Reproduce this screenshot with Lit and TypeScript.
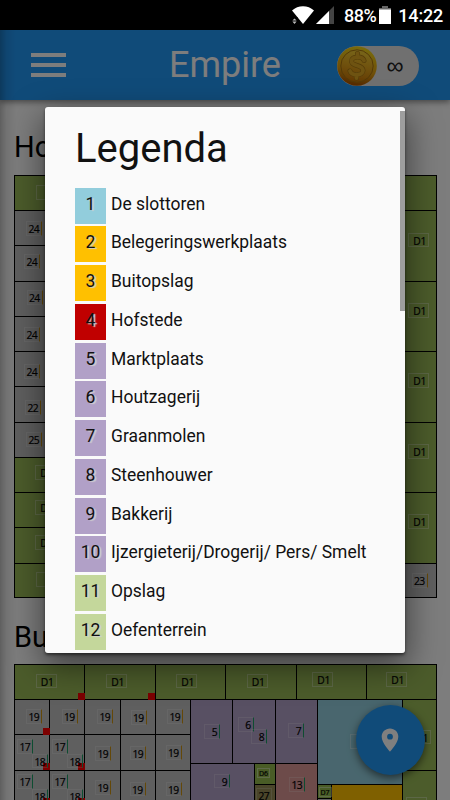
import { LitElement, html, css, svg } from "lit";
import { customElement, property } from "lit/decorators.js";

type Cell = { c: number; r: number; w: number; h: number; k: string };
type Tag = { x: number; y: number; t: string; k?: string };
type Mark = { x: number; y: number };

const cell = (c: number, r: number, w: number, h: number, k: string): Cell => ({ c, r, w, h, k });
const tag = (x: number, y: number, t: string, k = "num gold"): Tag => ({ x, y, t, k });

// The maps are laid out on a grid of 60 x 60 units.
const capitalCells: Cell[] = [
  ...[0, 1, 2, 3, 4, 5].map((i) => cell(i * 10, 0, 10, 5, "green")),
  ...[1, 2, 3, 4, 5, 6, 7].map((i) => cell(0, i * 5, 5, 5, "grey")),
  ...[8, 9, 10, 11].map((i) => cell(0, i * 5, 10, 5, "green")),
  ...[0, 1, 2, 3, 4].map((i) => cell(55, 5 + i * 10, 5, 10, "green")),
  cell(55, 55, 5, 5, "grey"),
];
const capitalTags: Tag[] = [
  tag(22, 10, "", "zone"),
  tag(12, 46, "24"), tag(10, 79, "24"), tag(12.5, 115, "24"), tag(10, 152, "24"),
  tag(10, 189, "24"), tag(11, 225, "22"), tag(12, 257, "25"),
  tag(21, 290, "D1", "zone"), tag(21, 325, "D1", "zone"), tag(21, 360, "D1", "zone"), tag(22, 397, "", "zone"),
  ...[57.5, 128, 198, 269, 339].map((y) => tag(394, y, "D1", "zone")),
  tag(397.5, 398, "23"),
];

const outpostCells: Cell[] = [
  ...[0, 1, 2, 3, 4, 5].map((i) => cell(i * 10, 0, 10, 5, "green")),
  ...[1, 2, 3].flatMap((r) => [0, 1, 2, 3, 4].map((c) => cell(c * 5, r * 5, 5, 5, "grey"))),
  cell(25, 5, 6, 9, "purple"), cell(31, 5, 6, 9, "purple"), cell(37, 5, 6, 9, "purple"),
  cell(43, 5, 12, 12, "blue"),
  cell(55, 5, 5, 10, "green"), cell(55, 15, 5, 10, "green"),
  cell(25, 14, 9, 6, "purple"), cell(34, 14, 3, 3, "lime"), cell(34, 17, 3, 3, "olive"),
  cell(37, 14, 6, 6, "rose"),
  cell(43, 17, 2, 2, "lime"), cell(43, 19, 2, 1, "grey"), cell(45, 17, 10, 3, "orange"),
];
const outpostTags: Tag[] = [
  tag(21.5, 9.5, "D1", "zone"), tag(92, 9.5, "D1", "zone"), tag(162, 9.5, "D1", "zone"), tag(232.5, 9.5, "D1", "zone"),
  tag(298, 8, "D1", "zone"), tag(372, 8, "D1", "zone"),
  tag(12, 45, "19"), tag(47.5, 45, "19"), tag(83, 45, "19"), tag(116.5, 46, "19"), tag(153, 45, "19"),
  tag(81, 82, "19"), tag(116, 81.5, "19"), tag(151.5, 81, "19"),
  tag(81, 116, "19"), tag(115.5, 117.5, "19"), tag(151.5, 117.5, "19"),
  ...[75, 110].flatMap((y) => [
    tag(3, y, "17", "num jade"), tag(38, y, "17", "num jade"),
    tag(18, y + 14.5, "18", "num jade"), tag(53, y + 14.5, "18", "num jade"),
  ]),
  tag(190, 60, "5", "num jade"), tag(223.5, 53, "6", "num jade"), tag(237, 65, "8", "num jade"),
  tag(274, 59, "7", "num jade"), tag(200, 109.5, "9", "num jade"),
  tag(243, 104, "D6", "tiny"), tag(242, 123.5, "27", "num"), tag(275, 113, "13", "num jade"),
  tag(336, 70, "", "zone"), tag(396, 65.5, "D1", "zone"), tag(392, 133, "", "zone"), tag(304.5, 123, "D7", "tiny"),
];
const outpostMarks: Mark[] = [
  { x: 64, y: 28.5 }, { x: 134, y: 28.5 }, { x: 29, y: 63.5 }, { x: 29, y: 98.5 },
  { x: 64, y: 98.5 }, { x: 29, y: 133.5 }, { x: 64, y: 133.5 },
];

const legend: [string, string, string][] = [
  ["1", "De slottoren", "blue"],
  ["2", "Belegeringswerkplaats", "orange"],
  ["3", "Buitopslag", "orange"],
  ["4", "Hofstede", "red"],
  ["5", "Marktplaats", "purple"],
  ["6", "Houtzagerij", "purple"],
  ["7", "Graanmolen", "purple"],
  ["8", "Steenhouwer", "purple"],
  ["9", "Bakkerij", "purple"],
  ["10", "Ijzergieterij/Drogerij/ Pers/ Smelt", "purple"],
  ["11", "Opslag", "light"],
  ["12", "Oefenterrein", "light"],
];

@customElement("castle-map")
class CastleMap extends LitElement {
  @property({ attribute: false }) cells: Cell[] = [];
  @property({ attribute: false }) tags: Tag[] = [];
  @property({ attribute: false }) marks: Mark[] = [];

  static styles = css`
    :host { display: block; position: relative; width: 423px; height: 423px; margin-left: 14px;
      outline: 1px solid #000; outline-offset: -1px; background: #98b956; }
    .grid { display: grid; width: 423px; height: 423px; grid-template-columns: repeat(60, 7.05px); grid-template-rows: repeat(60, 7.05px); }
    .cell { border-left: 1px solid #000; border-top: 1px solid #000; }
    .green { background: #98b956; }
    .grey { background: #bfbfbf; }
    .purple { background: #b1a0c7; }
    .blue { background: #92cddc; }
    .rose { background: #da9694; }
    .orange { background: #ffc000; }
    .lime { background: #92b84c; }
    .olive { background: #948a54; }
    .tag { position: absolute; box-sizing: border-box; height: 14.5px; border: 1px solid rgba(255, 255, 255, 0.22);
      font: 10.3px/15px "Open Sans", "Noto Sans", sans-serif; letter-spacing: -0.6px; color: #000; text-align: right; white-space: nowrap; -webkit-text-stroke: 0.2px #000; }
    .zone { width: 21px; padding-right: 2px; letter-spacing: -0.3px; border-color: rgba(255, 255, 255, 0.32); }
    .num { width: 16px; padding-right: 2px; }
    .gold { border-right-color: #c89010; }
    .jade { border-right-color: #1c9a62; }
    .tiny { width: 13px; height: 10px; padding-right: 1px; font-size: 7px; line-height: 9px; letter-spacing: 0; border-color: rgba(255, 255, 255, 0.4); }
    .mark { position: absolute; width: 7px; height: 7px; background: #f80000; }
  `;

  render() {
    return html`
      <div class="grid">
        ${this.cells.map((d) => html`<div class="cell ${d.k}" style="grid-area:${d.r + 1}/${d.c + 1}/span ${d.h}/span ${d.w}"></div>`)}
      </div>
      ${this.marks.map((m) => html`<i class="mark" style="left:${m.x}px;top:${m.y}px"></i>`)}
      ${this.tags.map((t) => html`<span class="tag ${t.k}" style="left:${t.x}px;top:${t.y}px">${t.t}</span>`)}
    `;
  }
}

const coin = svg`
  <defs>
    <linearGradient id="face" x1="0.6" y1="0" x2="0.4" y2="1">
      <stop offset="0" stop-color="#f0cc34"></stop><stop offset="0.5" stop-color="#e0a41c"></stop><stop offset="1" stop-color="#c87406"></stop>
    </linearGradient>
    <linearGradient id="rim" x1="0.6" y1="0" x2="0.4" y2="1">
      <stop offset="0" stop-color="#f2d818"></stop><stop offset="0.6" stop-color="#e0a010"></stop><stop offset="1" stop-color="#a85000"></stop>
    </linearGradient>
  </defs>
  <circle cx="20" cy="20" r="19.8" fill="url(#rim)"></circle>
  <circle cx="20" cy="20" r="16.2" fill="url(#face)" stroke="#a87410" stroke-width="1"></circle>
  <g fill="none" stroke-linecap="round">
    <path d="M27 14.5C25.5 9.8 14.5 9.8 14.5 15.3C14.5 20.8 26 18.2 26 24.5C26 30 14.5 29.8 13 25M20.5 7.5V11M19.5 28.5V32" stroke="#a87812" stroke-width="5"></path>
    <path d="M27 14.5C25.5 9.8 14.5 9.8 14.5 15.3C14.5 20.8 26 18.2 26 24.5C26 30 14.5 29.8 13 25M20.5 7.5V11M19.5 28.5V32" stroke="#dca622" stroke-width="3.8"></path>
  </g>`;

@customElement("app-root")
class AppRoot extends LitElement {
  static styles = css`
    :host { display: flex; flex-direction: column; position: relative; width: 450px; height: 800px; overflow: hidden;
      background: #000; font-family: Roboto, sans-serif; color: #000; }
    .status { height: 30px; flex: none; display: flex; align-items: center; justify-content: flex-end; color: #fff;
      font-size: 18px; font-weight: 500; padding-right: 7px; box-sizing: border-box; }
    .status svg { flex: none; }
    .pct { margin-left: 10px; width: 33px; letter-spacing: -0.5px; }
    .battery { margin-left: 2px; }
    .clock { margin-left: 7px; width: 45px; text-align: right; letter-spacing: -0.2px; }
    .app { position: relative; height: 770px; flex: none; overflow: hidden; background: #fafafa; }
    .bar { position: relative; height: 70px; display: flex; align-items: center; background: #2196f3;
      box-shadow: 0 2px 6px rgba(0, 0, 0, 0.45); }
    .menu { width: 35px; margin-left: 31px; display: flex; flex-direction: column; gap: 6px; }
    .menu i { height: 4px; background: #fafafa; }
    .title { margin-left: 103px; width: 112px; font-size: 36px; line-height: 42px; color: #fafafa; white-space: nowrap; }
    .purse { margin: 2px 0 0 56px; width: 82px; height: 40px; border-radius: 20px; background: #e0e0e0; display: flex; align-items: center; }
    .amount { width: 36px; text-align: center; font: 24px/36px "Liberation Sans", sans-serif; color: #222; }
    h2 { margin: 0; padding: 30px 0 0 14px; height: 45px; font-weight: 400; font-size: 29px; line-height: 35px; }
    .second { padding-top: 22px; height: 44px; }
    .edge { position: absolute; inset: 0 auto 0 0; width: 16px; background: linear-gradient(90deg, rgba(0, 0, 0, 0.24), rgba(0, 0, 0, 0.08) 40%, transparent); }
    .fab { position: absolute; left: 355.5px; top: 675px; width: 69px; height: 70px; border-radius: 50%; background: #2196f3;
      display: flex; align-items: center; justify-content: center; box-shadow: 0 3px 9px rgba(0, 0, 0, 0.55); }
    .shade { position: absolute; inset: 0; background: rgba(0, 0, 0, 0.5); }
    .dialog { position: absolute; left: 45px; top: 77px; width: 360px; height: 546px; box-sizing: border-box; padding: 17px 30px 0;
      border-radius: 3px; background: #fafafa; overflow: hidden; }
    .cast { position: absolute; left: 45px; top: 77px; width: 360px; height: 546px; border-radius: 3px;
      box-shadow: 0 12px 32px 2px rgba(0, 0, 0, 0.5), 0 2px 3px rgba(0, 0, 0, 0.5); }
    h1 { margin: 0; height: 63.5px; font-weight: 400; font-size: 40px; line-height: 49px; color: #111; }
    .row { display: flex; align-items: center; height: 36px; margin-bottom: 2.77px; font-size: 17.45px; white-space: nowrap; color: #111; }
    .box { width: 31px; height: 36px; line-height: 33.5px; text-align: center; margin-right: 5px; text-shadow: 2px 1px 1px #d0d0d0; }
    .name { line-height: 33.5px; height: 36px; }
    .blue { background: #92cddc; }
    .orange { background: #ffc000; }
    .red { background: #c00000; }
    .purple { background: #b1a0c7; }
    .light { background: #c4d79b; }
    .thumb { position: absolute; right: 0; top: 4px; width: 5px; height: 200px; background: #9e9e9e; }
  `;

  render() {
    return html`
      <div class="status">
        <svg width="44" height="30" viewBox="0 0 44 30">
          <path d="M2 10.5C8 4.7 18 4.7 24 10.5L13 24Z" fill="#fff"></path>
          <path d="M1 17.5H8V24H1Z" fill="#000"></path>
          <path d="M2.4 20.5L4.5 18.5L6.6 20.5ZM2.4 21.5H6.6L4.5 24Z" fill="#bbb"></path>
          <path d="M44 6V24H26Z" fill="#444"></path>
          <path d="M39 11V24H26Z" fill="#fff"></path>
        </svg>
        <span class="pct">88%</span>
        <svg class="battery" width="12" height="30" viewBox="0 0 12 30">
          <path d="M3 6H9V8H12V10H0V8H3Z" fill="#666"></path><path d="M0 9.5H12V24H0Z" fill="#fff"></path>
        </svg>
        <span class="clock">14:22</span>
      </div>
      <main class="app">
        <header class="bar">
          <div class="menu"><i></i><i></i><i></i></div>
          <div class="title">Empire</div>
          <div class="purse">
            <svg width="40" height="40" viewBox="0 0 40 40">${coin}</svg>
            <span class="amount">∞</span>
          </div>
        </header>
        <h2>Ho</h2>
        <castle-map .cells=${capitalCells} .tags=${capitalTags}></castle-map>
        <h2 class="second">Bu</h2>
        <castle-map .cells=${outpostCells} .tags=${outpostTags} .marks=${outpostMarks}></castle-map>
        <div class="edge"></div>
        <div class="fab">
          <svg width="18" height="24" viewBox="0 0 18 24">
            <path d="M9 0.5C4.3 0.5 0.7 4.1 0.7 8.7C0.7 14.8 9 23.7 9 23.7S17.3 14.8 17.3 8.7C17.3 4.1 13.7 0.5 9 0.5ZM9 11.6A2.9 2.9 0 1 1 9 5.8A2.9 2.9 0 0 1 9 11.6Z" fill="#fff"></path>
          </svg>
        </div>
        <div class="shade"></div>
        <div class="cast"></div>
        <section class="dialog">
          <h1>Legenda</h1>
          ${legend.map(([n, name, k]) => html`<div class="row"><span class="box ${k}">${n}</span><span class="name">${name}</span></div>`)}
          <div class="thumb"></div>
        </section>
      </main>
    `;
  }
}
